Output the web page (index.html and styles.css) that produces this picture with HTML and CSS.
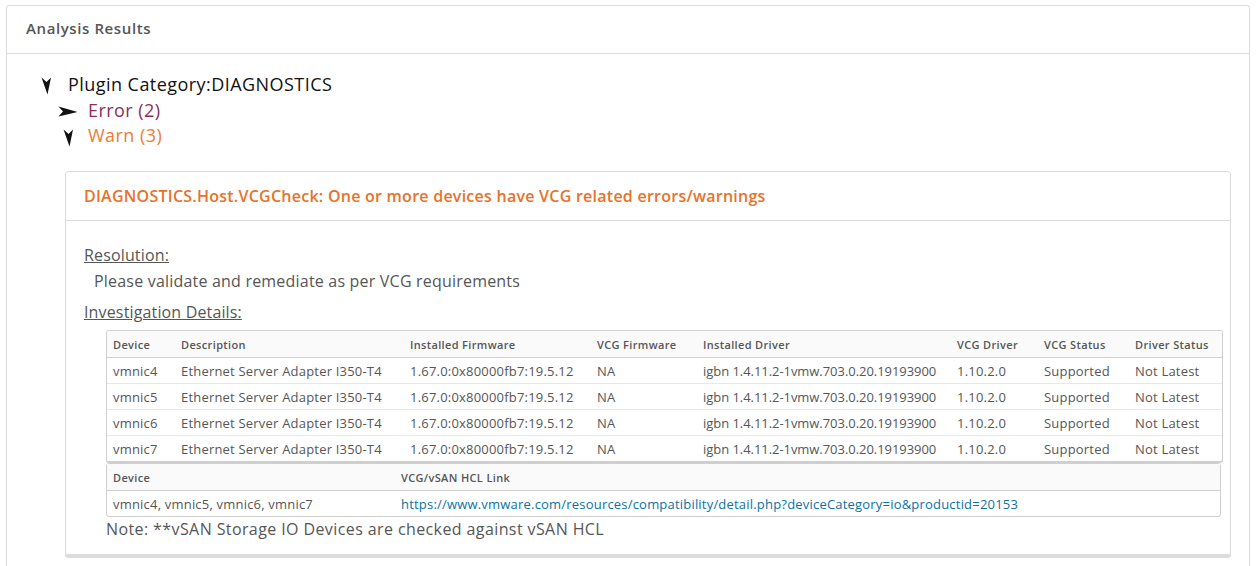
FILE: index.html
```html
<!DOCTYPE html>
<html>
<head>
<meta charset="utf-8">
<link rel="stylesheet" href="styles.css">
</head>
<body>
<div class="card">
  <div class="card-header">Analysis Results</div>
  <div class="card-body">
    <div class="tree-row level0">
      <svg class="ico-down" width="11" height="18" viewBox="0 0 11 18"><polygon points="0.5,0.5 5.5,5 10,0.5 6.5,17.5" fill="#111"/></svg>
      <span class="cat">Plugin Category:DIAGNOSTICS</span>
    </div>
    <div class="tree-row level1">
      <svg class="ico-right" width="20" height="11" viewBox="0 0 20 11"><polygon points="0.5,0.5 19.5,6 0.5,10.5 5,5.5" fill="#111"/></svg>
      <span class="err">Error (2)</span>
    </div>
    <div class="tree-row level1b">
      <svg class="ico-down" width="11" height="18" viewBox="0 0 11 18"><polygon points="0.5,0.5 5.5,5 10,0.5 6.5,17.5" fill="#111"/></svg>
      <span class="warn">Warn (3)</span>
    </div>

    <div class="inner-card">
      <div class="inner-header">DIAGNOSTICS.Host.VCGCheck: One or more devices have VCG related errors/warnings</div>
      <div class="inner-body">
        <div class="label">Resolution:</div>
        <div class="resolution">Please validate and remediate as per VCG requirements</div>
        <div class="label">Investigation Details:</div>
        <div class="tables">
          <table class="grid g1">
            <colgroup>
              <col class="c-dev"><col class="c-desc"><col class="c-ifw"><col class="c-vfw"><col class="c-idrv"><col class="c-vdrv"><col class="c-vst"><col class="c-dst">
            </colgroup>
            <thead>
              <tr><th>Device</th><th>Description</th><th>Installed Firmware</th><th>VCG Firmware</th><th>Installed Driver</th><th>VCG Driver</th><th>VCG Status</th><th>Driver Status</th></tr>
            </thead>
            <tbody>
              <tr><td>vmnic4</td><td>Ethernet Server Adapter I350-T4</td><td>1.67.0:0x80000fb7:19.5.12</td><td>NA</td><td class="drv">igbn 1.4.11.2-1vmw.703.0.20.19193900</td><td>1.10.2.0</td><td>Supported</td><td>Not Latest</td></tr>
              <tr><td>vmnic5</td><td>Ethernet Server Adapter I350-T4</td><td>1.67.0:0x80000fb7:19.5.12</td><td>NA</td><td class="drv">igbn 1.4.11.2-1vmw.703.0.20.19193900</td><td>1.10.2.0</td><td>Supported</td><td>Not Latest</td></tr>
              <tr><td>vmnic6</td><td>Ethernet Server Adapter I350-T4</td><td>1.67.0:0x80000fb7:19.5.12</td><td>NA</td><td class="drv">igbn 1.4.11.2-1vmw.703.0.20.19193900</td><td>1.10.2.0</td><td>Supported</td><td>Not Latest</td></tr>
              <tr><td>vmnic7</td><td>Ethernet Server Adapter I350-T4</td><td>1.67.0:0x80000fb7:19.5.12</td><td>NA</td><td class="drv">igbn 1.4.11.2-1vmw.703.0.20.19193900</td><td>1.10.2.0</td><td>Supported</td><td>Not Latest</td></tr>
            </tbody>
          </table>
          <table class="grid g2">
            <colgroup><col class="c2-dev"><col></colgroup>
            <thead><tr><th>Device</th><th>VCG/vSAN HCL Link</th></tr></thead>
            <tbody>
              <tr><td>vmnic4, vmnic5, vmnic6, vmnic7</td><td><a class="link" href="#">https://www.vmware.com/resources/compatibility/detail.php?deviceCategory=io&amp;productid=20153</a></td></tr>
            </tbody>
          </table>
          <div class="note">Note: **vSAN Storage IO Devices are checked against vSAN HCL</div>
        </div>
      </div>
    </div>
  </div>
</div>
</body>
</html>
```

FILE: styles.css
```css
html, body {
  margin: 0;
  padding: 0;
  background: #fff;
}
body {
  font-family: "Open Sans", "Noto Sans", sans-serif;
  color: #565656;
  padding: 5px 6px 0 6px;
  height: 566px;
  overflow: hidden;
  box-sizing: border-box;
}
.card {
  box-sizing: border-box;
  height: 561px;
  border: 1px solid #dcdcdc;
  border-bottom: none;
  border-radius: 3px 3px 0 0;
  overflow: hidden;
}
.card-header {
  height: 48px;
  box-sizing: border-box;
  padding: 0 0 3px 19px;
  border-bottom: 1px solid #dcdcdc;
  display: flex;
  align-items: center;
  font-size: 15px;
  font-weight: 600;
  letter-spacing: 0.6px;
  color: #565656;
}
.card-body {
  padding: 16px 18px 0 34px;
}
.tree-row {
  display: flex;
  align-items: center;
  height: 25px;
}
.tree-row svg { flex: none; }
.level0 { height: 27px; }
.level0 .ico-down { margin-right: 16px; margin-top: 5px; }
.level1 { padding-left: 17px; }
.level1 .ico-right { margin-right: 10px; margin-top: 3px; }
.level1b { padding-left: 22px; }
.level1b .ico-down { margin-right: 14px; margin-top: 6px; }
.cat, .err, .warn {
  font-size: 18px;
  letter-spacing: 0.45px;
}
.cat { color: #111; }
.err { color: #8a2f5b; }
.warn { color: #f07c33; }

.inner-card {
  margin-top: 24px;
  margin-left: 24px;
  border: 1px solid #dcdcdc;
  border-radius: 3px;
  box-shadow: 0 3px 0 #dcdcdc;
}
.inner-header {
  height: 48px;
  border-bottom: 1px solid #dcdcdc;
  padding-left: 18px;
  display: flex;
  align-items: center;
  font-size: 16px;
  font-weight: 600;
  letter-spacing: 0.25px;
  color: #e8722a;
}
.inner-body {
  padding: 21px 9px 13px 18px;
}
.label {
  font-size: 16px;
  letter-spacing: 0.15px;
  text-decoration: underline;
  color: #565656;
  line-height: 26px;
}
.resolution {
  font-size: 16px;
  letter-spacing: 0.2px;
  padding-left: 10px;
  line-height: 26px;
  margin-bottom: 5px;
}
.tables {
  padding-left: 22px;
  margin-top: 5px;
}
.grid {
  width: 100%;
  table-layout: fixed;
  border-collapse: separate;
  border-spacing: 0;
  border: 1px solid #cfcfcf;
  border-radius: 3px;
  font-size: 13px;
  letter-spacing: 0.2px;
  color: #565656;
}
.c-dev { width: 68px; }
.c-desc { width: 229px; }
.c-ifw { width: 187px; }
.c-vfw { width: 106px; }
.c-idrv { width: 254px; }
.c-vdrv { width: 87px; }
.c-vst { width: 91px; }
.c-dst { width: 93px; }
.c2-dev { width: 288px; }
.g1 { border-bottom: 2px solid #cfcfcf; }
.grid th {
  background: #fafafa;
  text-align: left;
  font-size: 11px;
  font-weight: 600;
  letter-spacing: 0.35px;
  height: 26px;
  padding: 0 6px;
  border-bottom: 1px solid #cfcfcf;
  color: #565656;
}
.grid td {
  height: 25px;
  padding: 0 6px;
  border-bottom: 1px solid #e8e8e8;
  white-space: nowrap;
}
.grid td.drv { letter-spacing: -0.05px; }
.grid tbody tr:last-child td { border-bottom: none; }
.link {
  color: #0b72a3;
  text-decoration: none;
}
.note {
  font-size: 16px;
  letter-spacing: 0.4px;
  line-height: 24px;
}
```
